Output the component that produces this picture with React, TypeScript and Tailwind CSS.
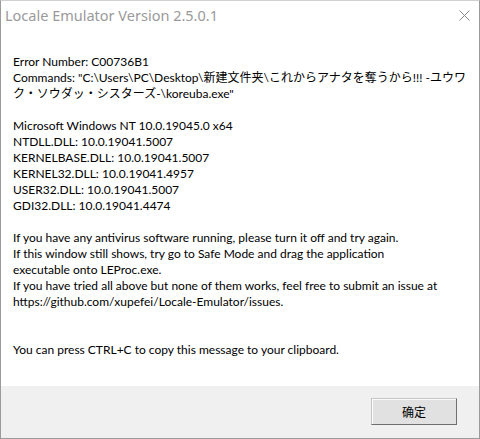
const body = 'Lato, "Noto Sans CJK JP", sans-serif';

const lines: string[] = [
  "Error Number: C00736B1",
  'Commands: "C:\\Users\\PC\\Desktop\\新建文件夹\\これからアナタを奪うから!!! -ユウワ',
  'ク・ソウダッ・シスターズ-\\koreuba.exe"',
  "",
  "Microsoft Windows NT 10.0.19045.0 x64",
  "NTDLL.DLL: 10.0.19041.5007",
  "KERNELBASE.DLL: 10.0.19041.5007",
  "KERNEL32.DLL: 10.0.19041.4957",
  "USER32.DLL: 10.0.19041.5007",
  "GDI32.DLL: 10.0.19041.4474",
  "",
  "If you have any antivirus software running, please turn it off and try again.",
  "If this window still shows, try go to Safe Mode and drag the application",
  "executable onto LEProc.exe.",
  "If you have tried all above but none of them works, feel free to submit an issue at",
  "https://github.com/xupefei/Locale-Emulator/issues.",
  "",
  "",
  "You can press CTRL+C to copy this message to your clipboard.",
];

export default function App() {
  return (
    <div className="w-[480px] h-[439px] bg-white flex flex-col border border-[#9b9b9b] border-t-[#d0d0d0] overflow-hidden">
      {/* title bar */}
      <div className="h-[29px] flex items-center justify-between pl-[4px] pr-[9px] shrink-0">
        <span className="text-[14.5px] text-[#9a9a9a] leading-none" style={{ fontFamily: '"Noto Sans", sans-serif' }}>
          Locale Emulator Version 2.5.0.1
        </span>
        <svg width="11" height="11" viewBox="0 0 11 11">
          <path d="M0.5 0.5 L10.5 10.5 M10.5 0.5 L0.5 10.5" stroke="#8a8a8a" strokeWidth="1" />
        </svg>
      </div>

      {/* message */}
      <div
        className="flex-1 pl-[12px] pt-[24px] text-[12px] leading-[16px] text-black"
        style={{ fontFamily: body }}
      >
        {lines.map((l, i) => (
          <div key={i} className="whitespace-pre h-[16px]">
            {l}
          </div>
        ))}
      </div>

      {/* footer */}
      <div className="h-[52px] bg-[#f0f0f0] flex items-start justify-end pr-[22px] pt-[12px] shrink-0">
        <button
          className="w-[86px] h-[27px] bg-[#e1e1e1] border border-[#c6c6c6] border-r-[#6e6e6e] border-b-[#6e6e6e] shadow-[inset_1px_1px_0_#fbfbfb] text-[12px] text-black"
          style={{ fontFamily: '"Noto Sans CJK SC", sans-serif' }}
        >
          确定
        </button>
      </div>
    </div>
  );
}
